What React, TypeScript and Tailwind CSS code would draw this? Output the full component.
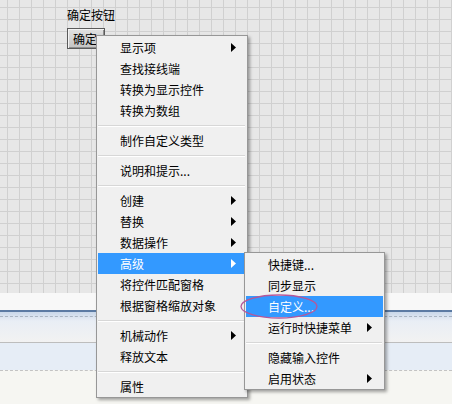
import React from "react";

type Item = { label: string; arrow?: boolean; active?: boolean; sep?: boolean };

const mainItems: Item[] = [
  { label: "显示项", arrow: true },
  { label: "查找接线端" },
  { label: "转换为显示控件" },
  { label: "转换为数组" },
  { label: "", sep: true },
  { label: "制作自定义类型" },
  { label: "", sep: true },
  { label: "说明和提示..." },
  { label: "", sep: true },
  { label: "创建", arrow: true },
  { label: "替换", arrow: true },
  { label: "数据操作", arrow: true },
  { label: "高级", arrow: true, active: true },
  { label: "将控件匹配窗格" },
  { label: "根据窗格缩放对象" },
  { label: "", sep: true },
  { label: "机械动作", arrow: true },
  { label: "释放文本" },
  { label: "", sep: true },
  { label: "属性" },
];

const subItems: Item[] = [
  { label: "快捷键..." },
  { label: "同步显示" },
  { label: "自定义...", active: true },
  { label: "运行时快捷菜单", arrow: true },
  { label: "", sep: true },
  { label: "隐藏输入控件" },
  { label: "启用状态", arrow: true },
];

function Arrow({ white }: { white?: boolean }) {
  return (
    <svg width="5" height="9" viewBox="0 0 5 9" className="shrink-0">
      <path d="M0 0 L5 4.5 L0 9 Z" fill={white ? "#ffffff" : "#000000"} />
    </svg>
  );
}

function MenuRows({ items, arrowGap }: { items: Item[]; arrowGap: string }) {
  return (
    <>
      {items.map((item, i) =>
        item.sep ? (
          <div key={i} className="h-[9px] flex flex-col justify-center ml-[0px] mr-[1px]">
            <div className="h-px bg-[#d7d7d7]" />
            <div className="h-px bg-white" />
          </div>
        ) : (
          <div
            key={i}
            className={
              "h-[21px] flex items-center pl-[22px] " +
              arrowGap +
              (item.active ? " bg-[#3399ff] text-white" : " text-black")
            }
          >
            <span className="flex-1 whitespace-nowrap leading-none">{item.label}</span>
            {item.arrow && <Arrow white={item.active} />}
          </div>
        )
      )}
    </>
  );
}

export default function App() {
  return (
    <div
      className="relative w-[452px] h-[404px] overflow-hidden text-[12px] bg-[#f6f6f2]"
      style={{ fontFamily: '"Noto Sans CJK SC", "Noto Sans", sans-serif' }}
    >
      {/* Front panel grid */}
      <div className="h-[293px] bg-[#e7e7e7] bg-[linear-gradient(to_right,#d0d0d0_1px,transparent_1px),linear-gradient(to_bottom,#d0d0d0_1px,transparent_1px)] bg-[size:12px_12px] bg-[position:7px_7px] pl-[67px] pt-[6px]">
        <div className="leading-[18px] text-black">确定按钮</div>
        <div className="mt-[4px] w-[38px] h-[21px] border border-[#5a5a5a] bg-[linear-gradient(to_bottom,#e2e2e2,#c4c4c4)] shadow-[inset_1px_1px_0_#f4f4f4,inset_-1px_-1px_0_#8e8e8e] flex items-center pl-[5px] leading-none text-black">
          确定
        </div>
      </div>

      {/* Lower panes */}
      <div className="h-[17px] bg-[#f8f8f8]" />
      <div className="h-[2px] bg-[#5b7aa3]" />
      <div className="h-[30px] bg-[linear-gradient(to_bottom,#c9d7ea,#e9eef5_30%,#f2f2f2)] pt-[4px]">
        <div className="border-t border-dashed border-[#a9b4c2]" />
      </div>
      <div className="h-px bg-[#bdbdbd]" />
      <div className="h-[27px] bg-[#e6edf6]" />
      <div className="border-t border-dashed border-[#c3c3c3]" />

      {/* Main context menu */}
      <div className="absolute left-[96px] top-[35px] w-[152px] border border-[#979797] bg-[#f0f0f0] px-[1px] pt-[1px] shadow-[2px_2px_3px_rgba(0,0,0,0.35)]">
        <MenuRows items={mainItems} arrowGap="pr-[10px]" />
      </div>

      {/* Submenu */}
      <div className="absolute left-[244px] top-[252px] w-[141px] border border-[#979797] bg-[#f0f0f0] px-[1px] pt-[1px] shadow-[2px_2px_3px_rgba(0,0,0,0.35)]">
        <MenuRows items={subItems} arrowGap="pr-[11px]" />
      </div>

      {/* Annotation ellipse */}
      <svg className="absolute left-[238px] top-[292px]" width="84" height="30" viewBox="0 0 84 30">
        <ellipse cx="41" cy="14.5" rx="38" ry="11.5" fill="none" stroke="#b5589a" strokeWidth="1.3" />
      </svg>
    </div>
  );
}
